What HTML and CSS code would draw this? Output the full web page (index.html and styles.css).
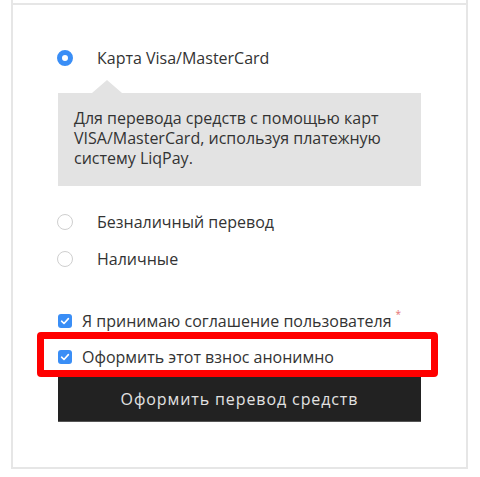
FILE: index.html
```html
<!DOCTYPE html>
<html lang="ru">
<head>
    <meta charset="UTF-8">
    <meta name="viewport" content="width=device-width, initial-scale=1.0">
    <title>Оплата</title>
    <link rel="stylesheet" href="styles.css">
</head>
<body>
    <div class="card">
        <div class="form">
            <!-- способы оплаты -->
            <label class="radio-row">
                <span class="radio checked"></span>
                <span>Карта Visa/MasterCard</span>
            </label>

            <div class="hint">
                Для перевода средств с помощью карт VISA/MasterCard, используя платежную систему LiqPay.
            </div>

            <label class="radio-row first-after-hint">
                <span class="radio"></span>
                <span>Безналичный перевод</span>
            </label>

            <label class="radio-row">
                <span class="radio"></span>
                <span>Наличные</span>
            </label>

            <!-- согласия -->
            <label class="check-row terms">
                <span class="check">
                    <svg viewBox="0 0 14 14" width="14" height="14"><path d="M3.6 7.2 L6 9.5 L10.4 4.6" fill="none" stroke="#fff" stroke-width="1.6" stroke-linecap="round" stroke-linejoin="round"/></svg>
                </span>
                <span>Я принимаю <span class="link">соглашение пользователя</span><sup class="req">*</sup></span>
            </label>

            <label class="check-row anon">
                <span class="check">
                    <svg viewBox="0 0 14 14" width="14" height="14"><path d="M3.6 7.2 L6 9.5 L10.4 4.6" fill="none" stroke="#fff" stroke-width="1.6" stroke-linecap="round" stroke-linejoin="round"/></svg>
                </span>
                <span>Оформить этот взнос анонимно</span>
                <span class="highlight"></span>
            </label>

            <button class="submit">Оформить перевод средств</button>
        </div>
    </div>
</body>
</html>
```

FILE: styles.css
```css
/* стиль страницы */
body {
    margin: 0;
    font-family: "Open Sans", "Noto Sans", sans-serif;
    color: #333;
    background: #fff;
}

.card {
    margin: 0 12px 0 11px;
    border: 2px solid #e6e6e6;
    border-top: none;
    padding-top: 3px;
}

.form {
    border-top: 2px solid #e6e6e6;
    padding: 41px 45px 45px 45px;
}

.radio-row {
    display: flex;
    align-items: center;
    height: 24px;
    font-size: 16px;
    margin-bottom: 13px;
}

.radio {
    width: 16px;
    height: 16px;
    box-sizing: border-box;
    border: 1.5px solid #cfcfcf;
    border-radius: 50%;
    margin-left: -1px;
    margin-right: 24px;
    background: #fff;
}

.radio.checked {
    border: 5px solid #3a8ef6;
}

.hint {
    position: relative;
    margin-top: 23px;
    background: #e3e3e3;
    padding: 15px 16px 18px 16px;
    font-size: 16px;
    line-height: 20px;
}

/* уголок подсказки */
.hint::before {
    content: "";
    position: absolute;
    top: -13px;
    left: 34px;
    border-left: 15px solid transparent;
    border-right: 15px solid transparent;
    border-bottom: 13px solid #e3e3e3;
}

.first-after-hint {
    margin-top: 24px;
}

.check-row {
    position: relative;
    display: flex;
    align-items: center;
    height: 24px;
    font-size: 16px;
}

.terms {
    margin-top: 38px;
}

.anon {
    margin-top: 12px;
}

.check {
    width: 14px;
    height: 14px;
    border-radius: 3px;
    background: #3a8ef6;
    margin-right: 10px;
    display: flex;
}

.req {
    color: #e57373;
    font-size: 10px;
    vertical-align: top;
    position: relative;
    top: -3px;
    margin-left: 4px;
}

/* красная рамка поверх строки */
.highlight {
    position: absolute;
    left: -21px;
    top: -13px;
    width: 401px;
    height: 45px;
    box-sizing: border-box;
    border: 7px solid #ff0000;
    border-radius: 4px;
}

.submit {
    display: block;
    width: 100%;
    height: 45px;
    margin-top: 8px;
    background: #222;
    border: none;
    border-bottom: 1px solid #555;
    color: #e2e2e2;
    font-family: "Open Sans", "Noto Sans", sans-serif;
    font-size: 16px;
    letter-spacing: 0.9px;
}
```
